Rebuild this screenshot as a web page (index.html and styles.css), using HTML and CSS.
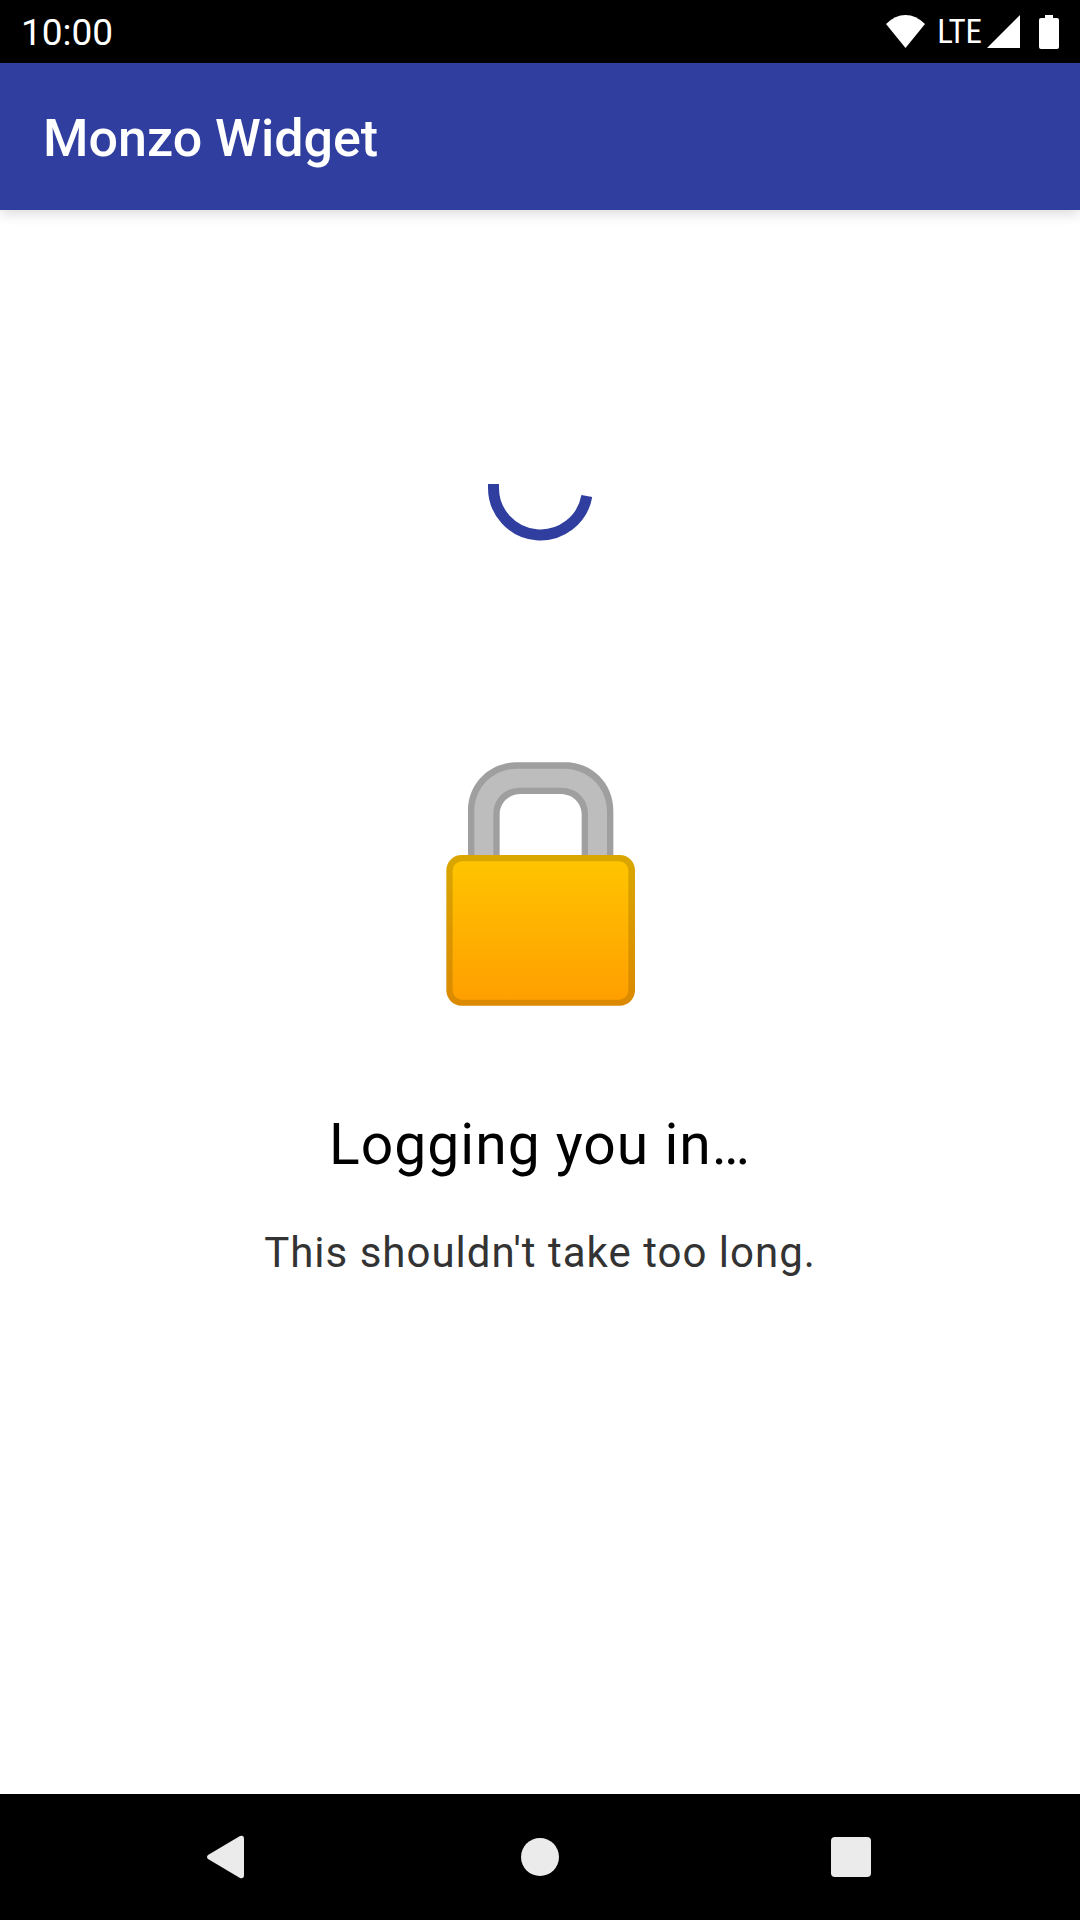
FILE: index.html
```html
<!DOCTYPE html>
<html lang="en">
<head>
<meta charset="utf-8">
<meta name="viewport" content="width=device-width, initial-scale=1">
<title>Monzo Widget</title>
<link rel="stylesheet" href="styles.css">
</head>
<body>
<div class="status-bar">
  <time class="clock">10:00</time>
  <div class="status-icons">
    <svg class="wifi" width="39" height="34" viewBox="0 0 39 34" aria-label="Wi-Fi"><path d="M0 9Q9 0 19.500 0T39 9L19.500 33Z"/></svg>
    <span class="network">LTE</span>
    <svg class="signal" width="33" height="34" viewBox="0 0 33 34" aria-label="Signal"><path d="M33 0V33H0Z"/></svg>
    <svg class="battery" width="20" height="34" viewBox="0 0 20 34" aria-label="Battery"><path d="M6 0h8v3h4q2 0 2 2v27q0 2-2 2H2q-2 0-2-2V5q0-2 2-2h4Z"/></svg>
  </div>
</div>
<header class="app-bar"><h1 class="app-title">Monzo Widget</h1></header>
<main class="content">
  <svg class="spinner" width="126" height="126" viewBox="0 0 126 126" role="progressbar" aria-label="Loading"><path d="M16.500 59V63A47 47 0 0 0 109.800 71"/></svg>
  <svg class="lock" width="220" height="270" viewBox="0 0 660 810" aria-hidden="true">
    <defs>
      <linearGradient id="body-fill" x1="0" y1="0" x2="0" y2="1"><stop offset="0" stop-color="#ffc400"/><stop offset="1" stop-color="#ff9f00"/></linearGradient>
      <linearGradient id="body-edge" x1="0" y1="0" x2="0" y2="1"><stop offset="0" stop-color="#d9a700"/><stop offset="1" stop-color="#db8900"/></linearGradient>
    </defs>
    <path fill="#9f9f9f" d="M114 330V181C114 101 178 37 258 37H407C487 37 550 101 550 181V330H455V193C455 158 427 132 392 132H272C237 132 209 158 209 193V330Z"/>
    <path fill="#bdbdbd" d="M133 330V184C133 112 190 56 262 56H402C474 56 531 112 531 184V330H474V190C474 147 439 113 396 113H268C225 113 190 147 190 190V330Z"/>
    <rect x="49" y="315" width="566" height="452" rx="46" fill="url(#body-edge)"/>
    <rect x="68" y="334" width="527" height="415" rx="28" fill="url(#body-fill)"/>
  </svg>
  <h2 class="headline">Logging you in…</h2>
  <p class="message">This shouldn't take too long.</p>
</main>
<nav class="nav-bar">
  <button class="nav-button" type="button" aria-label="Back"><svg width="44" height="44" viewBox="0 0 44 44"><path d="M1 20L33 1Q37 0 37 4V40Q37 44 33 43L1 24Q-1 22 1 20Z"/></svg></button>
  <button class="nav-button" type="button" aria-label="Home"><svg width="44" height="44" viewBox="0 0 44 44"><circle cx="22" cy="22" r="19"/></svg></button>
  <button class="nav-button" type="button" aria-label="Recent apps"><svg width="44" height="44" viewBox="0 0 44 44"><rect x="2" y="2" width="40" height="40" rx="4"/></svg></button>
</nav>
</body>
</html>
```

FILE: styles.css
```css
* { box-sizing: border-box; }

body {
  margin: 0;
  min-height: 100vh;
  display: flex;
  flex-direction: column;
  background: #fff;
  font-family: Roboto, "Liberation Sans", sans-serif;
}

h1, h2, p { margin: 0; font-weight: 400; }

.status-bar {
  height: 63px;
  padding: 0 21px;
  display: flex;
  align-items: center;
  justify-content: space-between;
  background: #000;
  color: #fff;
}

.clock { padding-top: 3px; font-size: 37px; line-height: 44px; }

.status-icons { display: flex; align-items: center; fill: #fff; }

.network {
  margin: 0 5px 0 12px;
  font-family: "Roboto Condensed", "Liberation Sans Narrow", Roboto, sans-serif;
  font-size: 33px;
  font-weight: 400;
  line-height: 40px;
}

.battery { margin-left: 19px; }

.app-bar {
  height: 147px;
  padding: 4px 43px 0;
  display: flex;
  align-items: center;
  background: #303f9f;
  color: #fff;
  box-shadow: 0 4px 12px rgba(0, 0, 0, 0.14);
}

.app-title { font-size: 52px; line-height: 62px; font-weight: 500; }

.content {
  flex: 1;
  padding: 215px 42px 42px;
  display: flex;
  flex-direction: column;
  align-items: center;
  text-align: center;
}

.spinner { fill: none; stroke: #303f9f; stroke-width: 11; }

.lock { margin-top: 199px; }

.headline {
  margin-top: 91px;
  font-size: 57px;
  line-height: 68px;
  letter-spacing: 1px;
  color: #000;
}

.message {
  margin-top: 49px;
  font-size: 42px;
  line-height: 49px;
  letter-spacing: 1px;
  color: #333;
}

.nav-bar {
  height: 126px;
  padding: 0 73px;
  display: flex;
  background: #000;
}

.nav-button {
  flex: 1;
  padding: 0;
  border: 0;
  display: flex;
  align-items: center;
  justify-content: center;
  background: none;
  fill: #ebebeb;
}
```
